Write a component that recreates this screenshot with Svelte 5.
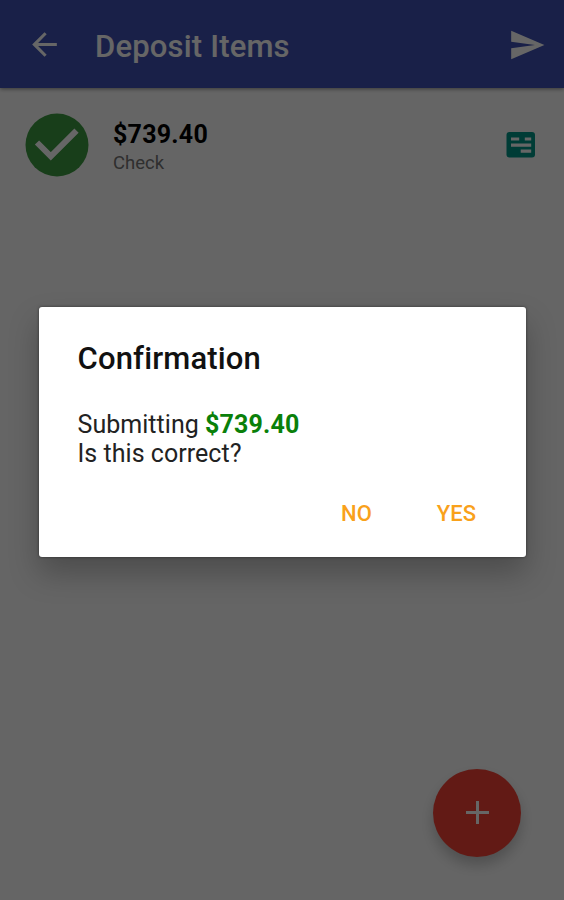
<script>
  let items = [{ amount: '$739.40', type: 'Check' }];
  let total = '$739.40';
  let confirming = true;

  function close() {
    confirming = false;
  }
</script>

<style>
  :global(body) {
    margin: 0;
    font-family: Roboto, sans-serif;
    background: #fff;
  }
  .screen {
    position: relative;
    display: flex;
    flex-direction: column;
    height: 900px;
    overflow: hidden;
    background: #fdfdfd;
  }
  header {
    display: flex;
    align-items: center;
    box-sizing: border-box;
    height: 88px;
    padding: 1px 18px 0 26px;
    background: #3f51b5;
    color: #fff;
    box-shadow: 0 1px 4px rgba(0, 0, 0, 0.45);
  }
  h1 {
    flex: 1;
    margin: 5px 0 0 32px;
    font-size: 31px;
    font-weight: 500;
    line-height: 36px;
    letter-spacing: 0.18px;
  }
  svg {
    display: block;
    fill: currentColor;
  }
  .item {
    display: flex;
    align-items: center;
    padding: 25px 25px 0;
  }
  .check {
    color: #3d9b42;
  }
  .details {
    flex: 1;
    margin: 6px 0 0 24px;
  }
  .amount {
    font-size: 25px;
    font-weight: 700;
    line-height: 30px;
    letter-spacing: 0.25px;
    color: #000;
  }
  .type {
    font-size: 18.5px;
    line-height: 27px;
    color: #757575;
  }
  .slip {
    margin-right: 4px;
    color: #009688;
  }
  .add {
    position: absolute;
    right: 43px;
    bottom: 43px;
    display: grid;
    place-items: center;
    width: 88px;
    height: 88px;
    padding: 0 0 2px;
    border: 0;
    border-radius: 50%;
    background: #f44336;
    color: #fff;
    box-shadow: 0 8px 14px rgba(0, 0, 0, 0.22);
  }
  .overlay {
    position: absolute;
    inset: 0;
    display: flex;
    align-items: flex-start;
    justify-content: center;
    background: rgba(0, 0, 0, 0.6);
  }
  .dialog {
    box-sizing: border-box;
    width: 487px;
    height: 250px;
    margin: 307px 0 0 1px;
    padding: 34px 39px 0 38.5px;
    border-radius: 3px;
    background: #fff;
    box-shadow: 0 16px 30px rgba(0, 0, 0, 0.25), 0 0 3px rgba(0, 0, 0, 0.5);
  }
  h2 {
    margin: 0;
    font-size: 31px;
    font-weight: 500;
    line-height: 36px;
    letter-spacing: 0.15px;
    color: #111;
  }
  p {
    margin: 33px 0 0;
    font-size: 25px;
    line-height: 29px;
    letter-spacing: 0.04px;
    color: #222;
  }
  strong {
    letter-spacing: 0.15px;
    color: #0a800a;
  }
  .actions {
    display: flex;
    justify-content: flex-end;
    gap: 65px;
    margin: 33px 11px 0 0;
  }
  .actions button {
    padding: 0;
    border: 0;
    background: none;
    font: 500 22px/26px Roboto, sans-serif;
    color: #f9a11b;
  }
</style>

<div class="screen">
  <header>
    <svg width="37" height="37" viewBox="0 0 24 24">
      <path d="M20 11H7.83l5.59-5.59L12 4l-8 8 8 8 1.41-1.41L7.83 13H20v-2z" />
    </svg>
    <h1>Deposit Items</h1>
    <svg width="38" height="38" viewBox="0 0 24 24">
      <path d="M2.01 21L23 12 2.01 3 2 10l15 2-15 2z" />
    </svg>
  </header>

  {#each items as item}
    <div class="item">
      <svg class="check" width="64" height="64" viewBox="0 0 64 64">
        <circle cx="32" cy="32" r="31.5" />
        <path d="M12 29.5l13.8 13.8 25.7-25.7" fill="none" stroke="#fff" stroke-width="6" />
      </svg>
      <div class="details">
        <div class="amount">{item.amount}</div>
        <div class="type">{item.type}</div>
      </div>
      <svg class="slip" width="29" height="26" viewBox="0 0 29 26">
        <rect x="0.5" width="28.5" height="25.5" rx="3" />
        <path d="M5 7h8.2M18.8 7h6.4M5 13.2h20.2M14.7 19.2h10.5" stroke="#fff" stroke-width="3.2" />
      </svg>
    </div>
  {/each}

  <button class="add" type="button" aria-label="Add item">
    <svg width="23" height="23" viewBox="0 0 23 23">
      <path d="M10 0h3v10h10v3H13v10h-3V13H0v-3h10z" />
    </svg>
  </button>

  {#if confirming}
    <div class="overlay">
      <div class="dialog" role="dialog" aria-labelledby="confirm-title">
        <h2 id="confirm-title">Confirmation</h2>
        <p>Submitting <strong>{total}</strong><br />Is this correct?</p>
        <div class="actions">
          <button type="button" on:click={close}>NO</button>
          <button type="button" on:click={close}>YES</button>
        </div>
      </div>
    </div>
  {/if}
</div>
